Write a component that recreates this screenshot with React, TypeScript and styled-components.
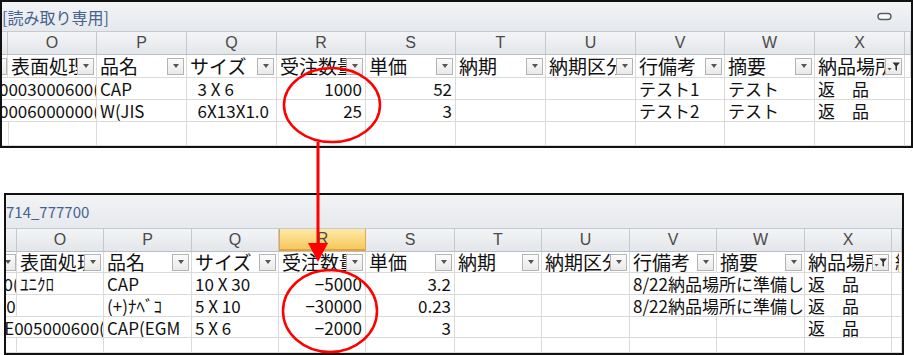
import styled, { createGlobalStyle, css } from "styled-components";

const GlobalStyle = createGlobalStyle`
  html, body { margin: 0; padding: 0; background: #fff; }
  body { font-family: "Noto Sans CJK JP", "Noto Sans", sans-serif; }
`;

type Align = "l" | "r" | "c";
type Cell = { t?: string; a?: Align; span?: number };
type Field = { label: string; btn?: "dd" | "filter" | "none"; edge?: boolean };

interface SheetSpec {
  title: string;
  ml: number;
  mt: number;
  width: number;
  height: number;
  titleH: number;
  headH: number;
  fieldH: number;
  rowH: number[];
  cols: string;
  selected?: string;
  minimize?: boolean;
  titleSize: number;
  fields: Field[];
  rows: Cell[][];
}

const letters = ["", "O", "P", "Q", "R", "S", "T", "U", "V", "W", "X", ""];

const Page = styled.div`
  position: relative;
  width: 913px;
  height: 355px;
  display: flex;
  flex-direction: column;
  overflow: hidden;
  background: #fff;
`;

const SheetWrap = styled.section<{ $w: number; $h: number; $ml: number; $mt: number }>`
  box-sizing: border-box;
  width: ${({ $w }) => $w}px;
  height: ${({ $h }) => $h}px;
  margin-left: ${({ $ml }) => $ml}px;
  margin-top: ${({ $mt }) => $mt}px;
  border: 2px solid #111;
  display: flex;
  flex-direction: column;
  overflow: hidden;
  flex: none;
`;

const TitleBar = styled.div<{ $h: number; $size: number }>`
  box-sizing: border-box;
  height: ${({ $h }) => $h}px;
  flex: none;
  display: flex;
  align-items: center;
  justify-content: space-between;
  padding: 0 19px 0 0;
  background: linear-gradient(#f2f3f5, #e6e9ed);
  border-bottom: 1px solid #c6cad0;
  color: #45638f;
  font-size: ${({ $size }) => $size}px;
  white-space: nowrap;
`;

const MinimizeIcon = () => (
  <svg width="15" height="9" viewBox="0 0 15 9">
    <rect x="1" y="1.5" width="13" height="6" rx="3" fill="#fafafa" stroke="#5a5f66" strokeWidth="1.4" />
  </svg>
);

const Row = styled.div<{ $cols: string; $h?: number }>`
  box-sizing: border-box;
  display: grid;
  grid-template-columns: ${({ $cols }) => $cols};
  ${({ $h }) => ($h ? css`height: ${$h}px; flex: none;` : css`flex: 1;`)}
  border-bottom: 1px solid #dadada;
`;

const HeadRow = styled(Row)`
  border-bottom: 1px solid #b9bec5;
  background: linear-gradient(#f3f4f6, #e3e6ea);
`;

const ColHead = styled.div<{ $sel?: boolean }>`
  box-sizing: border-box;
  border-right: 1px solid #c4c9d0;
  display: flex;
  align-items: center;
  justify-content: center;
  font-family: "Liberation Sans", Arial, sans-serif;
  font-size: 16px;
  color: #4a4a4a;
  ${({ $sel }) =>
    $sel &&
    css`
      background: linear-gradient(#fdeaa8, #f7c75c);
      border-left: 1px solid #e0a84a;
      border-right: 1px solid #e0a84a;
      border-bottom: 2px solid #e3a23a;
    `}
`;

const FieldCell = styled.div<{ $edge?: boolean }>`
  box-sizing: border-box;
  border-right: 1px solid #dadada;
  display: flex;
  align-items: center;
  justify-content: ${({ $edge }) => ($edge ? "flex-end" : "flex-start")};
  overflow: hidden;
  padding: 0 ${({ $edge }) => ($edge ? 0 : 2)}px 0 ${({ $edge }) => ($edge ? 0 : 3)}px;
  font-size: 19px;
  color: #111;
`;

const FieldLabel = styled.span`
  flex: 1;
  min-width: 0;
  overflow: hidden;
  white-space: nowrap;
  line-height: 22px;
`;

const DropButton = styled.span`
  box-sizing: border-box;
  flex: none;
  width: 17px;
  height: 17px;
  border: 1px solid #b4b4b4;
  background: linear-gradient(#fbfbfb, #e9e9e9);
  display: flex;
  align-items: center;
  justify-content: center;
`;

const Caret = styled.span`
  width: 0;
  height: 0;
  border-left: 3.5px solid transparent;
  border-right: 3.5px solid transparent;
  border-top: 4px solid #555;
`;

const FilterGlyph = () => (
  <svg width="15" height="13" viewBox="0 0 15 13">
    <path d="M1.5 8h4l-2 2.5z" fill="#555" />
    <path d="M6.5 2.5h7.5l-3 3.6v4.6l-1.6-1v-3.6z" fill="#333" />
  </svg>
);

const DataCell = styled.div<{ $a?: Align; $span?: number }>`
  box-sizing: border-box;
  grid-column: span ${({ $span }) => $span || 1};
  border-right: 1px solid #dadada;
  display: flex;
  align-items: center;
  justify-content: ${({ $a }) => ($a === "r" ? "flex-end" : $a === "c" ? "center" : "flex-start")};
  overflow: hidden;
  padding: 0 ${({ $a }) => ($a === "c" ? 0 : 3)}px;
  font-size: 17px;
  color: #111;
  white-space: pre;
`;

const Overlay = styled.svg`
  position: absolute;
  left: 0;
  top: 0;
  pointer-events: none;
`;

const Sheet = ({ spec }: { spec: SheetSpec }) => (
  <SheetWrap $w={spec.width} $h={spec.height} $ml={spec.ml} $mt={spec.mt}>
    <TitleBar $h={spec.titleH} $size={spec.titleSize}>
      <span>{spec.title}</span>
      {spec.minimize && <MinimizeIcon />}
    </TitleBar>
    <HeadRow $cols={spec.cols} $h={spec.headH}>
      {letters.map((l, i) => (
        <ColHead key={i} $sel={l !== "" && l === spec.selected}>
          {l}
        </ColHead>
      ))}
    </HeadRow>
    <Row $cols={spec.cols} $h={spec.fieldH}>
      {spec.fields.map((f, i) => (
        <FieldCell key={i} $edge={f.edge}>
          {f.label && <FieldLabel>{f.label}</FieldLabel>}
          {f.btn === "dd" && (
            <DropButton>
              <Caret />
            </DropButton>
          )}
          {f.btn === "filter" && (
            <DropButton>
              <FilterGlyph />
            </DropButton>
          )}
        </FieldCell>
      ))}
    </Row>
    {spec.rows.map((r, ri) => (
      <Row key={ri} $cols={spec.cols} $h={spec.rowH[ri]}>
        {r.map((c, ci) => (
          <DataCell key={ci} $a={c.a} $span={c.span}>
            {c.t}
          </DataCell>
        ))}
      </Row>
    ))}
  </SheetWrap>
);

const fields: Field[] = [
  { label: "", btn: "dd", edge: true },
  { label: "表面処理", btn: "dd" },
  { label: "品名", btn: "dd" },
  { label: "サイズ", btn: "dd" },
  { label: "受注数量", btn: "dd" },
  { label: "単価", btn: "dd" },
  { label: "納期", btn: "dd" },
  { label: "納期区分", btn: "dd" },
  { label: "行備考", btn: "dd" },
  { label: "摘要", btn: "dd" },
  { label: "納品場所", btn: "filter" },
  { label: "納品", btn: "none" },
];

const empty = (n: number): Cell[] => Array.from({ length: n }, () => ({}));

const topSheet: SheetSpec = {
  title: "[読み取り専用]",
  ml: 0,
  mt: 0,
  width: 913,
  height: 148,
  titleH: 30,
  headH: 23,
  fieldH: 23,
  rowH: [22, 22, 0],
  cols: "6px 89px 90px 90px 89px 90px 90px 90px 89px 90px 90px 1fr",
  minimize: true,
  titleSize: 16,
  fields,
  rows: [
    [
      { t: "0003000600(", a: "c", span: 2 },
      { t: "CAP" },
      { t: "  3 X 6" },
      { t: "1000", a: "r" },
      { t: "52", a: "r" },
      {},
      {},
      { t: "テスト1" },
      { t: "テスト" },
      { t: "返　品" },
      {},
    ],
    [
      { t: "0006000000(", a: "c", span: 2 },
      { t: "W(JIS" },
      { t: "  6X13X1.0" },
      { t: "25", a: "r" },
      { t: "3", a: "r" },
      {},
      {},
      { t: "テスト2" },
      { t: "テスト" },
      { t: "返　品" },
      {},
    ],
    empty(12),
  ],
};

const note = "8/22納品場所に準備して下さい";

const bottomSheet: SheetSpec = {
  title: "714_777700",
  ml: 4,
  mt: 45,
  width: 900,
  height: 162,
  titleH: 34,
  headH: 23,
  fieldH: 21,
  rowH: [22, 22, 21, 0],
  cols: "11px 87px 88px 87px 87px 89px 87px 88px 87px 88px 87px 1fr",
  selected: "R",
  titleSize: 15,
  fields,
  rows: [
    [
      { t: "0(", a: "c" },
      { t: "ﾕﾆｸﾛ" },
      { t: "CAP" },
      { t: "10 X 30" },
      { t: "−5000", a: "r" },
      { t: "3.2", a: "r" },
      {},
      {},
      { t: note, span: 2 },
      { t: "返　品" },
      {},
    ],
    [
      { t: "0", a: "c" },
      {},
      { t: "(+)ﾅﾍﾞｺ" },
      { t: "5 X 10" },
      { t: "−30000", a: "r" },
      { t: "0.23", a: "r" },
      {},
      {},
      { t: note, span: 2 },
      { t: "返　品" },
      {},
    ],
    [
      { t: "E005000600(", a: "c", span: 2 },
      { t: "CAP(EGM" },
      { t: "5 X 6" },
      { t: "−2000", a: "r" },
      { t: "3", a: "r" },
      {},
      {},
      {},
      {},
      { t: "返　品" },
      {},
    ],
    empty(12),
  ],
};

const Annotations = () => (
  <Overlay width="913" height="355" viewBox="0 0 913 355">
    <ellipse cx="332" cy="105" rx="48" ry="37" fill="none" stroke="#f00" strokeWidth="2.5" />
    <ellipse cx="330" cy="311" rx="47" ry="41" fill="none" stroke="#f00" strokeWidth="2.5" />
    <line x1="318" y1="142" x2="318" y2="246" stroke="#f00" strokeWidth="3" />
    <polygon points="308,243 328,243 318,262" fill="#f00" />
  </Overlay>
);

export default function App() {
  return (
    <>
      <GlobalStyle />
      <Page>
        <Sheet spec={topSheet} />
        <Sheet spec={bottomSheet} />
        <Annotations />
      </Page>
    </>
  );
}
